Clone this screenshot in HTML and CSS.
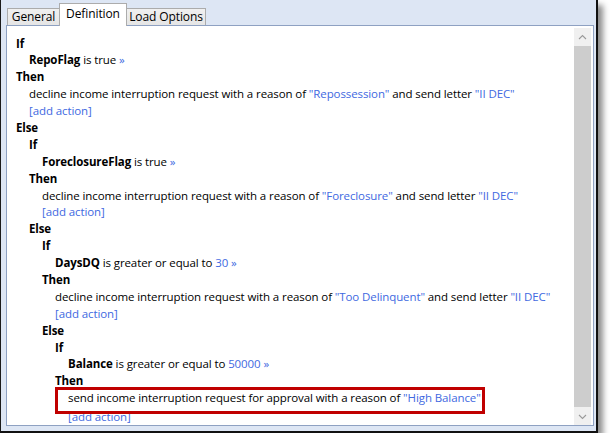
FILE: index.html
```html
<!DOCTYPE html>
<html>
<head>
<meta charset="utf-8">
<link rel="stylesheet" href="styles.css">
</head>
<body>
<div class="window">
  <div class="tabs">
    <div class="tab t-general">General</div>
    <div class="tab t-def active">Definition</div>
    <div class="tab t-load">Load Options</div>
  </div>
  <div class="panel">
    <div class="rules">
      <div class="ln kw">If</div>
      <div class="ln i1"><b>RepoFlag</b> is true <span class="lk">»</span></div>
      <div class="ln kw">Then</div>
      <div class="ln i1">decline income interruption request with a reason of <span class="lk">"Repossession"</span> and send letter <span class="lk">"II DEC"</span></div>
      <div class="ln i1"><span class="lk">[add action]</span></div>
      <div class="ln kw">Else</div>
      <div class="ln kw i1">If</div>
      <div class="ln i2"><b>ForeclosureFlag</b> is true <span class="lk">»</span></div>
      <div class="ln kw i1">Then</div>
      <div class="ln i2">decline income interruption request with a reason of <span class="lk">"Foreclosure"</span> and send letter <span class="lk">"II DEC"</span></div>
      <div class="ln i2"><span class="lk">[add action]</span></div>
      <div class="ln kw i1">Else</div>
      <div class="ln kw i2">If</div>
      <div class="ln i3"><b>DaysDQ</b> is greater or equal to <span class="lk">30 »</span></div>
      <div class="ln kw i2">Then</div>
      <div class="ln i3">decline income interruption request with a reason of <span class="lk">"Too Delinquent"</span> and send letter <span class="lk">"II DEC"</span></div>
      <div class="ln i3"><span class="lk">[add action]</span></div>
      <div class="ln kw i2">Else</div>
      <div class="ln kw i3">If</div>
      <div class="ln i4"><b>Balance</b> is greater or equal to <span class="lk">50000 »</span></div>
      <div class="ln kw i3">Then</div>
      <div class="ln i4"><span class="hl">send income interruption request for approval with a reason of <span class="lk">"High Balance"</span></span></div>
      <div class="ln i4 after-hl"><span class="lk">[add action]</span></div>
    </div>
    <div class="scrollbar">
      <div class="sb-btn">
        <svg width="9" height="6" viewBox="0 0 9 6"><polyline points="1,5 4.5,1.5 8,5" fill="none" stroke="#9a9a9a" stroke-width="1.1"/></svg>
      </div>
      <div class="sb-track"><div class="sb-thumb"></div></div>
      <div class="sb-btn">
        <svg width="9" height="6" viewBox="0 0 9 6"><polyline points="1,1 4.5,4.5 8,1" fill="none" stroke="#9a9a9a" stroke-width="1.1"/></svg>
      </div>
    </div>
  </div>
</div>
</body>
</html>
```
FILE: styles.css
```css
* { box-sizing: border-box; }
body {
  margin: 0;
  background: #fff;
  font-family: "Open Sans", "Noto Sans", sans-serif;
  font-size: 11.5px;
  letter-spacing: -0.1px;
  color: #000;
}
.window {
  width: 598px;
  height: 433px;
  background: #dde6f4;
  border-left: 1px solid #1a1a1a;
  border-right: 2px solid #111;
  border-bottom: 2px solid #111;
  box-shadow: 5px 5px 6px rgba(0, 0, 0, 0.45);
  padding: 3px 2px 5px 5px;
  display: flex;
  flex-direction: column;
}
.tabs {
  height: 22px;
  display: flex;
  align-items: flex-end;
  padding-left: 1px;
}
.tab {
  height: 17px;
  border: 1px solid #acacac;
  border-bottom: none;
  background: linear-gradient(#f0f0f0, #e5e5e5);
  text-align: center;
  line-height: 15px;
  white-space: nowrap;
  color: #000;
  font-size: 12px;
}
.tab + .tab { margin-left: -1px; }
.t-general { width: 53px; }
.t-def { width: 68px; }
.t-load { width: 80px; }
.tab.active {
  height: 23px;
  margin-bottom: -1px;
  background: #fff;
  position: relative;
  z-index: 1;
  line-height: 20px;
}
.panel {
  flex: 1;
  background: #fff;
  border: 1px solid #8ea1c2;
  display: flex;
}
.rules {
  flex: 1;
  padding: 9.5px 0 0 9px;
  line-height: 16.9px;
  white-space: nowrap;
  overflow: hidden;
}
.ln { height: 16.9px; }
.kw { font-weight: bold; }
.i1 { padding-left: 13px; }
.i2 { padding-left: 26px; }
.i3 { padding-left: 39px; }
.i4 { padding-left: 52px; }
.lk { color: #4169e1; }
.after-hl { margin-top: 1.5px; }
.hl {
  position: relative;
  display: inline-block;
}
.hl::after {
  content: "";
  position: absolute;
  left: -13px;
  right: -4px;
  top: -3.5px;
  height: 21.5px;
  border: 3px solid #c00000;
}
.scrollbar {
  width: 17px;
  margin: 2px 2px 0 0;
  display: flex;
  flex-direction: column;
  background: #f0f0f0;
}
.sb-btn {
  height: 17px;
  display: flex;
  align-items: center;
  justify-content: center;
  flex: none;
}
.sb-track {
  flex: 1;
  display: flex;
  padding: 1px 0;
}
.sb-thumb {
  flex: 1;
  background: #cdcdcd;
}
```
